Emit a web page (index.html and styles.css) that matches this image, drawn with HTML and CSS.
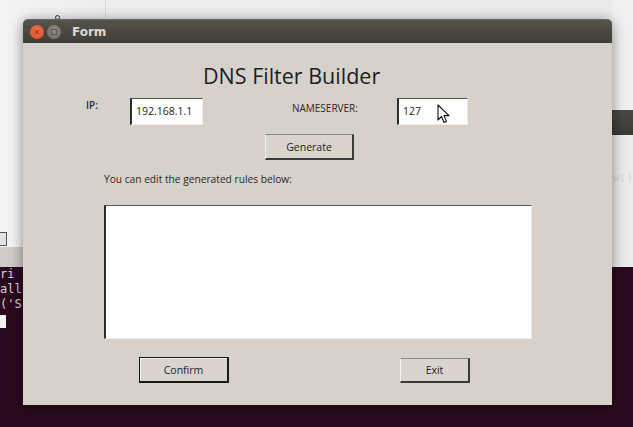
FILE: index.html
```html
<!DOCTYPE html>
<html>
<head>
<meta charset="utf-8">
<link rel="stylesheet" href="styles.css">
</head>
<body>
<div class="desktop">
  <div class="bg-left-win"><div class="bg-left-btn"></div></div>
  <div class="bg-right-win"></div>
  <div class="terminal-left">
    <div class="term-line">ri</div>
    <div class="term-line">all</div>
    <div class="term-line">('S</div>
    <div class="term-cursor"></div>
  </div>
  <div class="terminal-right">
    <div class="term-bar"></div>
    <div class="term-text">w()</div>
  </div>
  <div class="bg-dot"></div>

  <div class="window">
    <div class="titlebar">
      <span class="btn-close"><svg width="10" height="10" viewBox="0 0 10 10"><path d="M3 3 L7 7 M7 3 L3 7" stroke="#a83a1e" stroke-width="1.2"/></svg></span>
      <span class="btn-min"><svg width="10" height="10" viewBox="0 0 10 10"><rect x="2.5" y="2.5" width="5" height="5" fill="none" stroke="#5a5954" stroke-width="1"/></svg></span>
      <span class="win-title">Form</span>
    </div>
    <div class="content">
      <h1 class="heading">DNS Filter Builder</h1>
      <div class="row-inputs">
        <span class="label lbl-ip">IP:</span>
        <div class="field field-ip">192.168.1.1</div>
        <span class="label lbl-ns">NAMESERVER:</span>
        <div class="field field-ns">127</div>
      </div>
      <div class="row-generate">
        <div class="button btn-generate">Generate</div>
      </div>
      <div class="row-hint">You can edit the generated rules below:</div>
      <div class="rules"></div>
      <div class="row-actions">
        <div class="button btn-default btn-confirm">Confirm</div>
        <div class="button btn-exit">Exit</div>
      </div>
    </div>
  </div>

  <svg class="pointer" width="14" height="20" viewBox="0 0 14 20">
    <path d="M1 1 L1 16 L4.5 12.5 L7 18.5 L9.5 17.4 L7 11.6 L12 11.6 Z" fill="#fff" stroke="#111" stroke-width="1.1" stroke-linejoin="round"/>
  </svg>
</div>
</body>
</html>
```

FILE: styles.css
```css
* { box-sizing: border-box; }
html, body { margin: 0; padding: 0; }
body {
  width: 633px;
  height: 427px;
  overflow: hidden;
  font-family: "Open Sans", "Noto Sans", sans-serif;
}
.desktop {
  position: relative;
  width: 633px;
  height: 427px;
  background: #2a0a1e;
  overflow: hidden;
}
.bg-left-win {
  position: absolute;
  left: 0; top: 0;
  width: 633px;
  height: 267px;
  background: linear-gradient(to right, #f4f4f4 0, #ededed 105px, #ebebeb 100%);
}
.bg-left-win::after {
  content: "";
  position: absolute;
  left: 105px; top: 0;
  width: 1px; height: 18px;
  background: #d9d9d9;
}
.bg-left-btn {
  position: absolute;
  left: -2px; top: 232px;
  width: 9px; height: 14px;
  border: 1px solid #555;
  background: #e2e2e2;
}
.bg-left-win::before {
  content: "";
  position: absolute;
  left: 0; top: 247px;
  width: 30px; height: 20px;
  background: #cfcdca;
}
.bg-right-win {
  position: absolute;
  left: 612px; top: 0;
  width: 21px; height: 110px;
  background: #f0f0f0;
}
.bg-dot {
  position: absolute;
  left: 55px; top: 15px;
  width: 5px; height: 5px;
  border-radius: 50%;
  border: 1px solid #333;
}
.terminal-left {
  position: absolute;
  left: 0; top: 267px;
  width: 23px;
  font-family: "DejaVu Sans Mono", monospace;
  font-size: 12px;
  line-height: 15px;
  color: #d9d2d6;
}
.term-line { height: 15px; }
.term-cursor {
  width: 6px; height: 13px;
  background: #f2f2f2;
  margin-top: 3px;
}
.terminal-right {
  position: absolute;
  left: 612px; top: 110px;
  width: 21px; height: 317px;
}
.term-bar {
  height: 25px;
  background: linear-gradient(#4a4944, #3a3935);
}
.term-text {
  margin-top: 36px;
  padding-left: 1px;
  font-family: "DejaVu Sans Mono", monospace;
  font-size: 11px;
  color: #d9d2d6;
}

.window {
  position: absolute;
  left: 23px; top: 19px;
  width: 589px; height: 386px;
  display: flex;
  flex-direction: column;
  border-radius: 5px 5px 0 0;
  box-shadow: 0 2px 14px rgba(0,0,0,0.45);
  background: #d6d2cb;
}
.titlebar {
  height: 24px;
  flex: none;
  display: flex;
  align-items: center;
  padding-left: 7px;
  background: linear-gradient(#55544e, #46453f 60%, #3f3e39);
  border-radius: 5px 5px 0 0;
  border-top: 1px solid #66655f;
}
.btn-close, .btn-min {
  width: 14px; height: 14px;
  border-radius: 50%;
  display: flex;
  align-items: center;
  justify-content: center;
  flex: none;
}
.btn-close {
  background: radial-gradient(circle at 50% 40%, #f0764a, #d64a24);
}
.btn-min {
  margin-left: 3px;
  background: radial-gradient(circle at 50% 40%, #8d8c86, #6d6c66);
}
.win-title {
  margin-left: 11px;
  font-family: "DejaVu Sans", sans-serif;
  font-weight: bold;
  font-size: 12px;
  color: #dcd8cf;
}
.content {
  flex: 1;
  display: flex;
  flex-direction: column;
  align-items: flex-start;
  color: #222;
}
.heading {
  margin: 20px 0 0 180px;
  font-weight: normal;
  font-size: 21.5px;
  line-height: 25px;
  color: #1e1e1e;
}
.label {
  font-size: 10px;
  color: #2a2a2a;
}
.row-inputs {
  margin-top: 10px;
  display: flex;
  align-items: flex-start;
  height: 27px;
}
.lbl-ip { margin-left: 63px; margin-top: 0px; font-weight: 600; }
.lbl-ns { margin-left: 89px; margin-top: 3px; }
.field {
  height: 27px;
  background: #fff;
  border-top: 1px solid #555;
  border-left: 2px solid #2e2e2e;
  border-right: 1px solid #ecebe8;
  border-bottom: 1px solid #ecebe8;
  font-size: 10.5px;
  line-height: 24px;
  padding-left: 4px;
  color: #222;
}
.field-ip { margin-left: 32px; width: 73px; }
.field-ns { margin-left: 39px; width: 71px; }
.row-generate {
  margin: 9px 0 0 242px;
}
.button {
  height: 26px;
  display: flex;
  align-items: center;
  justify-content: center;
  font-size: 10.5px;
  color: #222;
  background: #d9d5ce;
  border-top: 1px solid #f4f2ee;
  border-left: 1px solid #f4f2ee;
  border-right: 2px solid #3a3a3a;
  border-bottom: 2px solid #3a3a3a;
}
.btn-generate {
  width: 89px;
  border-top-color: #8a8884;
}
.row-hint {
  margin: 12px 0 0 81px;
  font-size: 10.2px;
  line-height: 14px;
  color: #2a2a2a;
}
.rules {
  margin: 19px 0 0 81px;
  width: 428px;
  height: 134px;
  background: #fff;
  border-top: 1px solid #555;
  border-left: 2px solid #2e2e2e;
  border-right: 1px solid #ecebe8;
  border-bottom: 1px solid #ecebe8;
}
.row-actions {
  margin: 18px 0 0 116px;
  display: flex;
  align-items: flex-start;
}
.btn-default {
  border: 1px solid #1a1a1a;
  border-right-width: 2px;
  border-bottom-width: 2px;
  box-shadow: inset 1px 1px 0 #f4f2ee;
}
.btn-confirm { width: 90px; }
.btn-exit {
  width: 70px;
  height: 25px;
  margin-left: 171px;
  margin-top: 1px;
  border-top-color: #8a8884;
}
.pointer {
  position: absolute;
  left: 437px; top: 104px;
}
```
